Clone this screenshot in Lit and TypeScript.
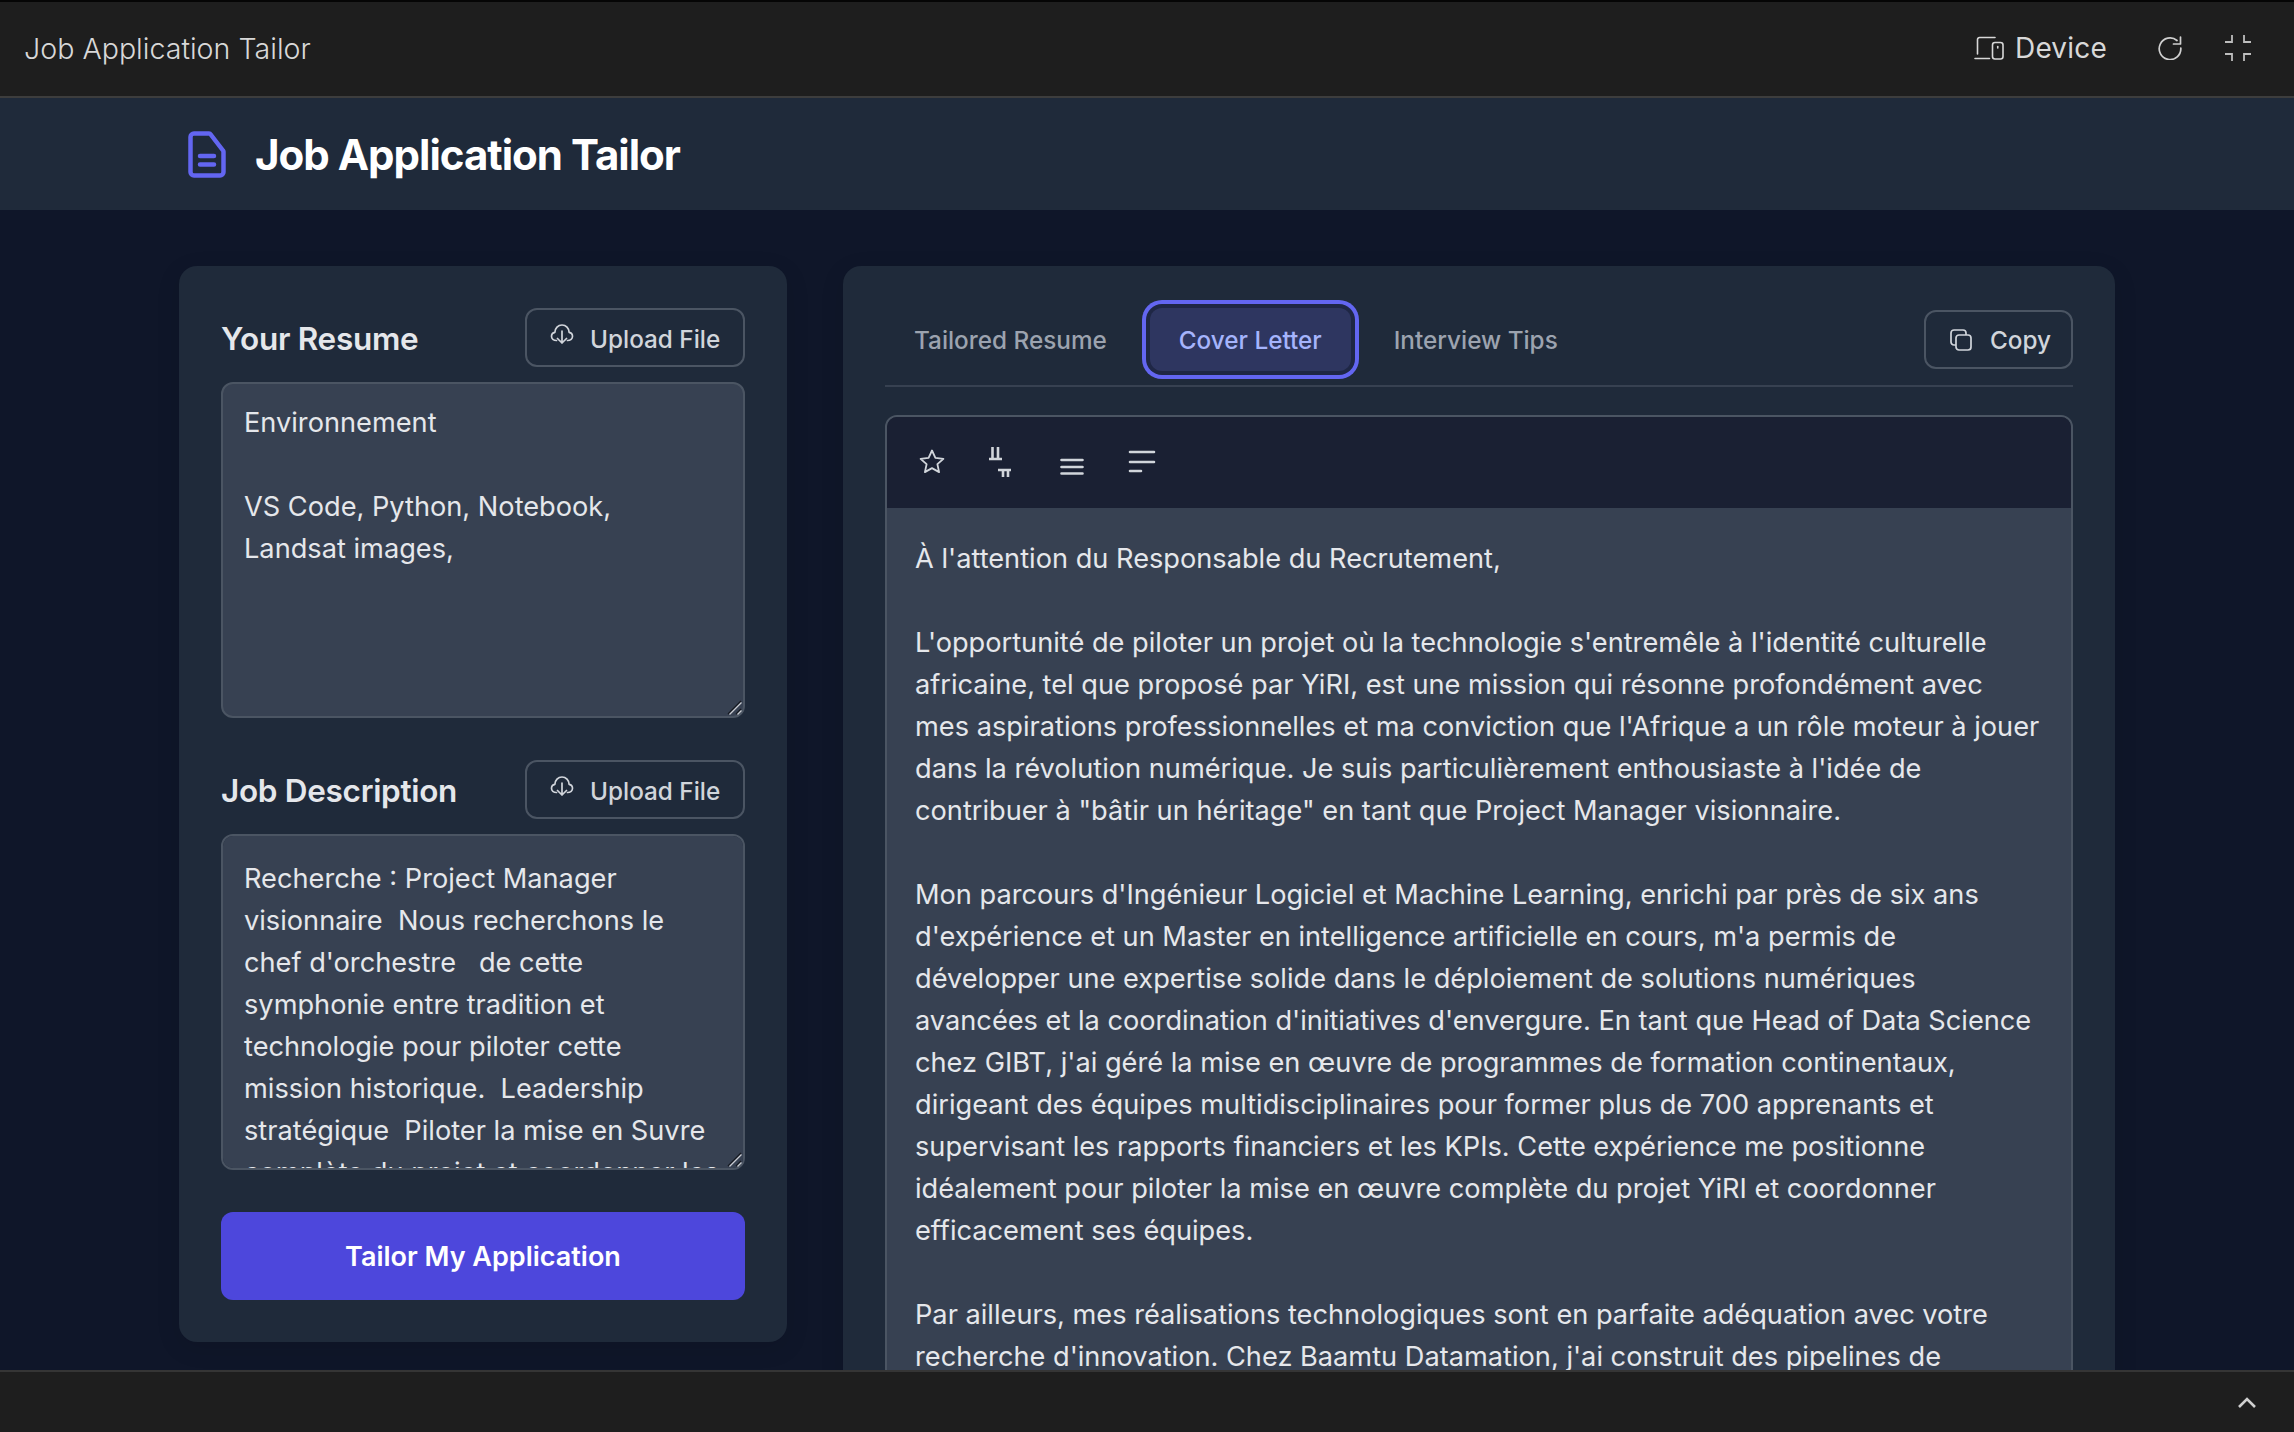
import {LitElement, css, html} from 'lit';
import {customElement} from 'lit/decorators.js';

const cloudIcon = html`<svg class="cloud" viewBox="0 0 24 20" fill="none" stroke="currentColor" stroke-width="1.7" stroke-linecap="round" stroke-linejoin="round">
	<path d="M6.500 16.500C3.500 16.500 1.500 14.600 1.500 12.300c0-2 1.400-3.600 3.400-4C5 4.300 8 1 12 1s7 3.300 7.100 7.300c2 .4 3.400 2 3.400 4 0 2.300-2 4.200-5 4.200"></path>
	<path d="M12 7v12M7.500 14.500 12 19l4.500-4.500"></path>
</svg>`;

const grip = html`<svg class="grip" viewBox="0 0 15 15" fill="none" stroke-width="1.300">
	<path d="M1 14 14 1M9 14l5-5" stroke="#15181f"></path>
	<path d="M2.500 14.500 14.500 2.500M10.500 14.500l4-4" stroke="#c9ccd2"></path>
</svg>`;

@customElement('app-root')
export class AppRoot extends LitElement {
	static styles = css`
		:host {
			color: #e5e7eb;
			display: flex;
			flex-direction: column;
			font-family: Inter, 'Liberation Sans', sans-serif;
			height: 100vh;
			overflow: hidden;
		}

		.chrome-top {
			align-items: center;
			background: #1e1e1e;
			border-bottom: 2px solid #3d3d3d;
			border-top: 2px solid #050505;
			box-sizing: border-box;
			color: #d8d8d8;
			display: flex;
			flex: none;
			font-size: 28.6px;
			font-weight: 300;
			height: 98px;
			justify-content: space-between;
			padding: 0 43px 2px 24px;
		}

		.chrome-actions {
			align-items: center;
			display: flex;
		}

		.device {
			align-items: center;
			display: flex;
			font-size: 28px;
			font-weight: 400;
			gap: 11px;
			letter-spacing: 0.2px;
			margin-right: 51px;
		}

		.refresh {
			margin-right: 43px;
		}

		.header {
			align-items: center;
			background: #1f2a3a;
			display: flex;
			flex: none;
			gap: 29px;
			height: 112px;
			padding-left: 188px;
		}

		.header h1 {
			color: #fff;
			font-size: 42px;
			font-weight: 700;
			letter-spacing: -1px;
			margin: 0;
		}

		.main {
			background: #0f1629;
			flex: 1;
			min-height: 0;
			overflow: hidden;
			padding-top: 56px;
		}

		.grid {
			align-items: start;
			display: grid;
			gap: 56px;
			grid-template-columns: 608px 1272px;
			justify-content: center;
		}

		.card {
			background: #1f2a3a;
			border-radius: 18px;
			box-shadow: 0 6px 24px rgb(0 0 0 / 10%);
			box-sizing: border-box;
			padding: 42px;
		}

		.field-head {
			align-items: center;
			display: flex;
			height: 59px;
			justify-content: space-between;
			margin-bottom: 15px;
		}

		.field-head h2 {
			color: #e5e7eb;
			font-size: 31.5px;
			font-weight: 600;
			letter-spacing: -0.3px;
			margin: 2px 0 0;
		}

		.outline-btn {
			align-items: center;
			background: transparent;
			border: 2px solid #4b5563;
			border-radius: 12px;
			box-sizing: border-box;
			color: #d1d5db;
			display: flex;
			font-family: inherit;
			font-size: 24.3px;
			font-weight: 500;
			height: 59px;
			padding: 0;
		}

		.upload {
			gap: 16px;
			padding-left: 23px;
			padding-top: 2px;
			width: 220px;
		}

		.cloud {
			height: 20px;
			margin-top: -9px;
			width: 24px;
		}

		.area {
			position: relative;
		}

		.grip {
			bottom: 3px;
			height: 15px;
			position: absolute;
			right: 3px;
			width: 15px;
		}

		textarea {
			background: #374152;
			border: 2px solid #4b5563;
			border-radius: 12px;
			box-sizing: border-box;
			color: #e5e7eb;
			display: block;
			font-family: inherit;
			font-size: 27.2px;
			height: 336px;
			line-height: 42px;
			outline: none;
			padding: 17.5px 32px 17.5px 21px;
			resize: none;
			scrollbar-width: none;
			width: 100%;
		}

		textarea.job {
			padding: 21.5px 21px;
		}

		.second {
			margin-top: 42px;
		}

		.submit {
			background: #4d47dc;
			border: 0;
			border-radius: 12px;
			color: #fff;
			display: block;
			font-family: inherit;
			font-size: 27px;
			font-weight: 600;
			height: 88px;
			margin-top: 42px;
			width: 100%;
		}

		.tabbar {
			align-items: center;
			border-bottom: 2px solid #374151;
			display: flex;
			justify-content: space-between;
			padding-bottom: 14px;
		}

		.tabs {
			align-items: center;
			display: flex;
			gap: 14px;
		}

		.tab {
			background: transparent;
			border: 0;
			border-radius: 12px;
			color: #9ca3af;
			font-family: inherit;
			font-size: 24.3px;
			font-weight: 500;
			height: 63px;
			padding: 0 29px;
		}

		.tab.active {
			background: #2e3660;
			box-shadow:
				0 0 0 4px #1f2745,
				0 0 0 8px #6366f1;
			color: #a5b4fc;
		}

		.copy {
			gap: 18px;
			padding-left: 24px;
			width: 149px;
		}

		.output {
			border: 2px solid #4b5563;
			border-radius: 12px;
			margin-top: 28px;
			overflow: hidden;
		}

		.toolbar {
			align-items: center;
			background: #1a2033;
			box-sizing: border-box;
			color: #d1d5db;
			display: flex;
			gap: 26px;
			height: 91px;
			padding: 0 0 2px 23px;
		}

		.toolbar svg {
			display: block;
			height: 44px;
			width: 44px;
		}

		.body {
			background: #374152;
			color: #e5e7eb;
			font-size: 27.2px;
			line-height: 42px;
			padding: 30px 28px 28px;
		}

		.body p {
			margin: 0 0 42px;
		}

		.chrome-bottom {
			align-items: center;
			background: #1e1e1e;
			border-top: 2px solid #353535;
			box-sizing: border-box;
			display: flex;
			flex: none;
			height: 62px;
			justify-content: flex-end;
			padding-right: 38px;
		}
	`;

	render() {
		return html`
			<div class="chrome-top">
				<span>Job Application Tailor</span>
				<div class="chrome-actions">
					<div class="device">
						<svg width="30" height="24" viewBox="0 0 30 24" fill="none" stroke="#d8d8d8" stroke-width="1.6" stroke-linecap="round">
							<path d="M21 1.500H5.500a2 2 0 0 0-2 2V18M1 22.500h14.500"></path>
							<rect x="18.500" y="6.500" width="10.500" height="16.500" rx="2.500"></rect>
							<path d="M23.750 10.500v1.500"></path>
						</svg>
						Device
					</div>
					<svg class="refresh" width="24" height="24" viewBox="0 0 24 24" fill="none" stroke="#d0d0d0" stroke-width="1.7" stroke-linecap="round" stroke-linejoin="round">
						<path d="M19 4.500A10.800 10.800 0 1 0 22.800 12"></path>
						<path d="M22.500 1v7h-7"></path>
					</svg>
					<svg width="26" height="26" viewBox="0 0 26 26" fill="none" stroke="#bdbdbd" stroke-width="1.800">
						<path d="M7 0v7H0M19 0v7h7M7 26v-7H0M19 26v-7h7"></path>
					</svg>
				</div>
			</div>

			<header class="header">
				<svg width="38" height="47" viewBox="0 0 38 47" fill="none" stroke="#6366f1" stroke-width="4.500" stroke-linecap="round" stroke-linejoin="round">
					<path d="M6 2.500h15a2 2 0 0 1 1.700 1L35 19.500a2 2 0 0 1 .5 1.300V41a3.500 3.500 0 0 1-3.500 3.500H6A3.500 3.500 0 0 1 2.500 41V6A3.500 3.500 0 0 1 6 2.500Z"></path>
					<path d="M12 25h14M12 33.500h14"></path>
				</svg>
				<h1>Job Application Tailor</h1>
			</header>

			<main class="main">
				<div class="grid">
					<section class="card">
						<div class="field-head">
							<h2>Your Resume</h2>
							<button class="outline-btn upload">${cloudIcon}Upload File</button>
						</div>
						<div class="area">
							<textarea>Environnement

VS Code, Python, Notebook, Landsat images,</textarea>
							${grip}
						</div>

						<div class="field-head second">
							<h2>Job Description</h2>
							<button class="outline-btn upload">${cloudIcon}Upload File</button>
						</div>
						<div class="area">
							<textarea class="job">Recherche : Project Manager visionnaire  Nous recherchons le chef d'orchestre   de cette symphonie entre tradition et technologie pour piloter cette mission historique.  Leadership stratégique  Piloter la mise en Suvre complète du projet et coordonner les</textarea>
							${grip}
						</div>

						<button class="submit">Tailor My Application</button>
					</section>

					<section class="card">
						<div class="tabbar">
							<div class="tabs">
								<button class="tab">Tailored Resume</button>
								<button class="tab active">Cover Letter</button>
								<button class="tab">Interview Tips</button>
							</div>
							<button class="outline-btn copy">
								<svg width="22" height="22" viewBox="0 0 22 22" fill="none" stroke="currentColor" stroke-width="1.700">
									<rect x="6" y="6" width="15" height="15" rx="3"></rect>
									<path d="M6 16H4a3 3 0 0 1-3-3V4a3 3 0 0 1 3-3h9a3 3 0 0 1 3 3v2"></path>
								</svg>
								Copy
							</button>
						</div>

						<div class="output">
							<div class="toolbar">
								<svg viewBox="0 0 44 44" fill="none" stroke="currentColor" stroke-width="1.800" stroke-linejoin="round">
									<path d="M22 10.500l3.400 7.400 8 .9-6 5.400 1.700 7.900-7.100-4-7.100 4 1.700-7.900-6-5.400 8-.9Z"></path>
								</svg>
								<svg viewBox="0 0 44 44" fill="none" stroke="currentColor" stroke-width="2.600">
									<path d="M9 19h13M12.500 7v12M18 7v12"></path>
									<path d="M18 30h13M23 30v7M28 30v7"></path>
								</svg>
								<svg viewBox="0 0 44 44" fill="none" stroke="currentColor" stroke-width="2.600" stroke-linecap="round">
									<path d="M11.500 20h21M11.500 27h21M11.500 33.500h21"></path>
								</svg>
								<svg viewBox="0 0 44 44" fill="none" stroke="currentColor" stroke-width="2.600" stroke-linecap="round">
									<path d="M10 12h24M10 22h24M10 31h11"></path>
								</svg>
							</div>
							<div class="body">
								<p>À l'attention du Responsable du Recrutement,</p>
								<p>L'opportunité de piloter un projet où la technologie s'entremêle à l'identité culturelle africaine, tel que proposé par YiRI, est une mission qui résonne profondément avec mes aspirations professionnelles et ma conviction que l'Afrique a un rôle moteur à jouer dans la révolution numérique. Je suis particulièrement enthousiaste à l'idée de contribuer à "bâtir un héritage" en tant que Project Manager visionnaire.</p>
								<p>Mon parcours d'Ingénieur Logiciel et Machine Learning, enrichi par près de six ans d'expérience et un Master en intelligence artificielle en cours, m'a permis de développer une expertise solide dans le déploiement de solutions numériques avancées et la coordination d'initiatives d'envergure. En tant que Head of Data Science chez GIBT, j'ai géré la mise en œuvre de programmes de formation continentaux, dirigeant des équipes multidisciplinaires pour former plus de 700 apprenants et supervisant les rapports financiers et les KPIs. Cette expérience me positionne idéalement pour piloter la mise en œuvre complète du projet YiRI et coordonner efficacement ses équipes.</p>
								<p>Par ailleurs, mes réalisations technologiques sont en parfaite adéquation avec votre recherche d'innovation. Chez Baamtu Datamation, j'ai construit des pipelines de</p>
							</div>
						</div>
					</section>
				</div>
			</main>

			<div class="chrome-bottom">
				<svg width="18" height="12" viewBox="0 0 18 12" fill="none" stroke="#d0d0d0" stroke-width="2.600">
					<path d="M1 11l8-8 8 8"></path>
				</svg>
			</div>
		`;
	}
}
